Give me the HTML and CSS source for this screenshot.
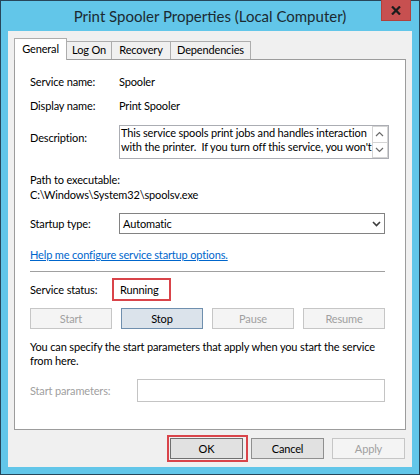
FILE: index.html
```html
<!DOCTYPE html>
<html>
<head>
<meta charset="utf-8">
<link rel="stylesheet" href="styles.css">
</head>
<body>
<div class="window">
  <div class="titlebar">
    <div class="title">Print Spooler Properties (Local Computer)</div>
    <div class="close" title="Close">
      <svg width="10" height="9" viewBox="0 0 10 9"><path d="M1 0.5 L9 8.5 M9 0.5 L1 8.5" stroke="#1c1c1c" stroke-width="2.2" fill="none"/></svg>
    </div>
  </div>
  <div class="client">
    <div class="tabs">
      <div class="tab active">General</div>
      <div class="tab t-logon">Log On</div>
      <div class="tab t-recovery">Recovery</div>
      <div class="tab t-deps">Dependencies</div>
    </div>
    <div class="panel">
      <div class="row r-name"><span>Service name:</span><span>Spooler</span></div>
      <div class="row r-display"><span>Display name:</span><span>Print Spooler</span></div>
      <div class="row r-desc">
        <span class="desc-label">Description:</span>
        <div class="desc-box">
          <div class="desc-text">This service spools print jobs and handles interaction<br>with the printer.&nbsp; If you turn off this service, you won't</div>
          <div class="scroll">
            <div class="sb-btn"><svg width="9" height="6" viewBox="0 0 9 6"><path d="M1 5 L4.5 1.5 L8 5" stroke="#6a6a6a" stroke-width="1.2" fill="none"/></svg></div>
            <div class="sb-btn"><svg width="9" height="6" viewBox="0 0 9 6"><path d="M1 1 L4.5 4.5 L8 1" stroke="#6a6a6a" stroke-width="1.2" fill="none"/></svg></div>
          </div>
        </div>
      </div>
      <div class="path-label">Path to executable:</div>
      <div class="path">C:\Windows\System32\spoolsv.exe</div>
      <div class="row r-startup">
        <span class="mid-label">Startup type:</span>
        <div class="select"><span>Automatic</span><svg width="9" height="6" viewBox="0 0 9 6"><path d="M1 1 L4.5 4.5 L8 1" stroke="#3c3c3c" stroke-width="1.6" fill="none"/></svg></div>
      </div>
      <div class="link-row"><a class="link" href="#">Help me configure service startup options.</a></div>
      <div class="sep"></div>
      <div class="row r-status">
        <span class="mid-label">Service status:</span>
        <span class="status">Running</span>
      </div>
      <div class="svc-buttons">
        <button class="btn disabled">Start</button>
        <button class="btn stop">Stop</button>
        <button class="btn disabled">Pause</button>
        <button class="btn disabled">Resume</button>
      </div>
      <p class="note">You can specify the start parameters that apply when you start the service<br>from here.</p>
      <div class="row r-params">
        <span class="params-label">Start parameters:</span>
        <div class="params-input"></div>
      </div>
    </div>
    <div class="actions">
      <button class="btn dlg ok">OK</button>
      <button class="btn dlg cancel">Cancel</button>
      <button class="btn dlg disabled">Apply</button>
    </div>
  </div>
</div>
</body>
</html>
```

FILE: styles.css
```css
* { box-sizing: border-box; }
html, body { margin: 0; padding: 0; }
body {
  width: 420px;
  height: 475px;
  font-family: Lato, "Liberation Sans", sans-serif;
  font-size: 11px;
  letter-spacing: -0.15px;
  color: #000;
  background: #62c6e9;
}
.window {
  width: 420px;
  height: 475px;
  border: 1px solid #27465a;
  background: #62c6e9;
  display: flex;
  flex-direction: column;
}
.titlebar {
  height: 30px;
  flex: none;
  display: grid;
  grid-template-columns: 1fr auto 1fr;
  align-items: start;
}
.title {
  grid-column: 2;
  font-size: 15px;
  letter-spacing: 0;
  line-height: 31px;
  color: #1b2a31;
  white-space: nowrap;
}
.close {
  grid-column: 3;
  justify-self: end;
  margin: -1px 8px 0 0;
  width: 30px;
  height: 21px;
  background: #c75050;
  border: 1px solid #b0413d;
  border-top: none;
  display: flex;
  align-items: center;
  justify-content: center;
}
.client {
  flex: 1;
  margin: 0 7px 7px;
  background: #f0f0f0;
  display: flex;
  flex-direction: column;
}
.tabs {
  display: flex;
  align-items: flex-end;
  margin: 7px 0 0 6px;
}
.tab {
  height: 18px;
  border: 1px solid #adadad;
  border-bottom: none;
  background: #f0f0f0;
  margin-left: -1px;
  text-align: center;
  line-height: 16px;
  white-space: nowrap;
}
.tab.active {
  width: 53px;
  height: 22px;
  margin-left: 0;
  margin-bottom: -1px;
  background: #fff;
  line-height: 19px;
  position: relative;
  z-index: 1;
}
.t-logon { width: 46px; }
.t-recovery { width: 60px; }
.t-deps { width: 81px; }
.panel {
  margin: 0 6px;
  height: 371px;
  flex: none;
  border: 1px solid #9c9c9c;
  background: #fff;
  padding: 14px 20px 0 15px;
  line-height: 15px;
}
.row {
  display: grid;
  grid-template-columns: 89px 1fr;
  white-space: nowrap;
}
.r-display { margin-top: 9px; }
.r-desc { margin-top: 12px; }
.desc-label { padding-top: 5px; }
.desc-box {
  height: 34px;
  border: 1px solid #abadb3;
  display: flex;
}
.desc-text {
  flex: 1;
  height: 28px;
  overflow: hidden;
  line-height: 14px;
  padding-left: 1px;
  white-space: nowrap;
}
.scroll {
  width: 16px;
  display: flex;
  flex-direction: column;
}
.sb-btn {
  flex: 1;
  border: 1px solid #d4d4d4;
  background: #fff;
  display: flex;
  align-items: center;
  justify-content: center;
}
.sb-btn + .sb-btn { border-top: none; }
.path-label { margin-top: 13px; }
.r-startup { margin-top: 11px; }
.mid-label { align-self: center; }
.select {
  height: 21px;
  border: 1px solid #828282;
  background: #fff;
  display: flex;
  align-items: center;
  justify-content: space-between;
  padding: 0 3px 0 3px;
}
.link-row { margin-top: 13px; }
.link { color: #0066cc; text-decoration: underline; }
.sep {
  margin-top: 9px;
  height: 1px;
  background: #a0a0a0;
}
.r-status { margin-top: 6px; }
.status {
  margin-left: -7px;
  width: 59px;
  height: 23px;
  border: 2px solid #d9444a;
  padding-left: 6px;
  line-height: 19px;
}
.svc-buttons {
  margin-top: 7px;
  display: flex;
  justify-content: space-between;
}
.btn {
  font: inherit;
  letter-spacing: inherit;
  margin: 0;
  padding: 0;
  height: 21px;
  border: 1px solid #adadad;
  background: #e1e1e1;
  color: #000;
  display: flex;
  align-items: center;
  justify-content: center;
}
.svc-buttons .btn { width: 82px; }
.btn.disabled {
  background: #f4f4f4;
  border-color: #c6c6c6;
  color: #a0a0a0;
}
.btn.stop {
  background: #dbe3eb;
  border-color: #6f8fae;
}
.note {
  margin: 11px 0 0;
  line-height: 14px;
  white-space: nowrap;
}
.r-params {
  margin-top: 11px;
  grid-template-columns: 107px 1fr;
}
.params-label { color: #a0a0a0; align-self: center; }
.params-input {
  height: 23px;
  border: 1px solid #c4c4c4;
  background: #fff;
}
.actions {
  margin-top: 8px;
  padding-right: 7px;
  display: flex;
  justify-content: flex-end;
  gap: 8px;
}
.btn.dlg { width: 73px; }
.btn.ok {
  border-color: #6f6f6f;
  position: relative;
}
.btn.ok::after {
  content: "";
  position: absolute;
  top: -4px;
  left: -4px;
  right: -6px;
  bottom: -4px;
  border: 2px solid #d9444a;
}
.btn.cancel { border-color: #8f8f8f; }
```
